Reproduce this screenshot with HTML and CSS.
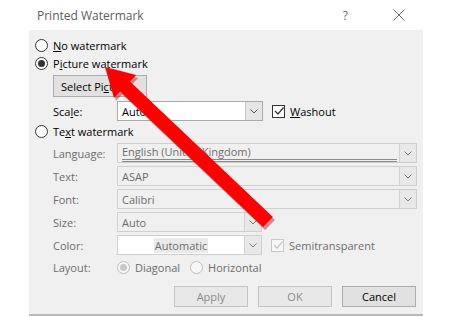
FILE: index.html
```html
<!DOCTYPE html>
<html>
<head>
<meta charset="utf-8">
<link rel="stylesheet" href="styles.css">
</head>
<body>
<div class="window">
  <div class="titlebar">
    <span class="title">Printed Watermark</span>
    <span class="help">?</span>
    <svg class="close" width="12" height="12" viewBox="0 0 12 12"><path d="M0.5 0.5 L11.5 11.5 M11.5 0.5 L0.5 11.5" stroke="#6a6a6a" stroke-width="1"/></svg>
  </div>
  <div class="panel">
    <div class="row opt first"><span class="radio"></span><span class="lbl"><u>N</u>o watermark</span></div>
    <div class="row opt"><span class="radio on"></span><span class="lbl">P<u>i</u>cture watermark</span></div>
    <div class="btn select">Select Pi<u>c</u>ture...</div>
    <div class="row field scale">
      <span class="flabel">Sca<u>l</u>e:</span>
      <div class="combo w146"><span class="val">Auto</span><span class="dd"><svg width="8" height="5" viewBox="0 0 8 5"><path d="M0.5 0.5 L4 4 L7.5 0.5" fill="none" stroke="#555" stroke-width="1"/></svg></span></div>
      <span class="check on"><svg width="10" height="10" viewBox="0 0 10 10"><path d="M1 5 L4 8 L9.5 1.5" fill="none" stroke="#333" stroke-width="1.2"/></svg></span>
      <span class="clabel"><u>W</u>ashout</span>
    </div>
    <div class="row opt tw"><span class="radio"></span><span class="lbl">Te<u>x</u>t watermark</span></div>
    <div class="fields">
      <div class="row field">
        <span class="flabel dis">Language:</span>
        <div class="combo dis w300 lang"><span class="val dis"><span class="dbl">English (United Kingdom)</span></span><span class="dd"><svg width="8" height="5" viewBox="0 0 8 5"><path d="M0.5 0.5 L4 4 L7.5 0.5" fill="none" stroke="#777" stroke-width="1"/></svg></span></div>
      </div>
      <div class="row field">
        <span class="flabel dis">Text:</span>
        <div class="combo dis w300"><span class="val dis">ASAP</span><span class="dd"><svg width="8" height="5" viewBox="0 0 8 5"><path d="M0.5 0.5 L4 4 L7.5 0.5" fill="none" stroke="#777" stroke-width="1"/></svg></span></div>
      </div>
      <div class="row field">
        <span class="flabel dis">Font:</span>
        <div class="combo dis w300"><span class="val dis">Calibri</span><span class="dd"><svg width="8" height="5" viewBox="0 0 8 5"><path d="M0.5 0.5 L4 4 L7.5 0.5" fill="none" stroke="#777" stroke-width="1"/></svg></span></div>
      </div>
      <div class="row field">
        <span class="flabel dis">Size:</span>
        <div class="combo dis w145"><span class="val dis">Auto</span><span class="dd"><svg width="8" height="5" viewBox="0 0 8 5"><path d="M0.5 0.5 L4 4 L7.5 0.5" fill="none" stroke="#777" stroke-width="1"/></svg></span></div>
      </div>
      <div class="row field">
        <span class="flabel dis">Color:</span>
        <div class="combo dis w145 color"><span class="val dis center"><span class="auto">Automatic</span></span><span class="dd"><svg width="8" height="5" viewBox="0 0 8 5"><path d="M0.5 0.5 L4 4 L7.5 0.5" fill="none" stroke="#777" stroke-width="1"/></svg></span></div>
        <span class="check dis"><svg width="10" height="10" viewBox="0 0 10 10"><path d="M1 5 L4 8 L9.5 1.5" fill="none" stroke="#c4c4c4" stroke-width="1.2"/></svg></span>
        <span class="clabel dis">Semitransparent</span>
      </div>
      <div class="row field layout">
        <span class="flabel dis">Layout:</span>
        <span class="radio dis on"></span><span class="lbl dis">Diagonal</span>
        <span class="radio dis gap"></span><span class="lbl dis">Horizontal</span>
      </div>
    </div>
    <div class="buttons">
      <div class="btn dis">Apply</div>
      <div class="btn dis">OK</div>
      <div class="btn">Cancel</div>
    </div>
  </div>
  <svg class="arrow" width="450" height="317" viewBox="0 0 450 317">
    <polygon points="107,70 138.2,78 132,84.5 274.9,220 265.1,230 122.2,94.5 116,101" fill="#8a0000" opacity="0.4"/>
    <polygon points="105,67 136.2,75 130,81.5 272.9,217 263.1,227 120.2,91.5 114,98" fill="#ff0000"/>
  </svg>
</div>
</body>
</html>
```

FILE: styles.css
```css
* { box-sizing: border-box; }
html, body { margin: 0; padding: 0; background: #ffffff; }
body {
  font-family: "Open Sans", "Noto Sans", sans-serif;
  font-size: 11px;
  color: #000;
}
u { text-decoration: underline; text-underline-offset: 1px; }
.window { position: relative; width: 450px; height: 317px; background: #fff; overflow: hidden; }
.titlebar { height: 30px; display: flex; align-items: center; }
.title { margin-left: 37px; color: #5c5c5c; font-size: 12px; }
.help { margin-left: auto; color: #6a6a6a; font-size: 12px; margin-right: 45px; }
.close { margin-right: 45px; }
.panel {
  margin-left: 29px;
  width: 394px;
  height: 286px;
  background: #f0f0f0;
  border-bottom: 2px solid #b9b9b9;
  display: flex;
  flex-direction: column;
}
.row { display: flex; align-items: center; }
.opt { height: 16px; margin-left: 6px; margin-top: 2px; }
.opt.first { margin-top: 7px; }
.opt.tw { margin-top: 2px; }
.radio {
  width: 13px; height: 13px; border-radius: 50%;
  border: 1px solid #333; background: #fff;
  display: inline-flex; align-items: center; justify-content: center;
  flex: none;
}
.radio.on::after { content: ""; width: 7px; height: 7px; border-radius: 50%; background: #333; }
.radio.dis { border-color: #bcbcbc; background: #f7f7f7; }
.radio.dis.on::after { background: #c7c7c7; }
.lbl { margin-left: 5px; }
.lbl.dis { color: #6d6d6d; }
.btn {
  height: 21px; width: 74px;
  background: #e1e1e1; border: 1px solid #adadad;
  display: flex; align-items: center; justify-content: center;
}
.btn.select { margin-left: 24px; margin-top: 4px; width: 94px; height: 22px; justify-content: flex-start; padding-left: 7px; }
.btn.dis { background: #e8e8e8; border-color: #c4c4c4; color: #8a8a8a; }
.field { height: 20px; margin-left: 24px; }
.scale { margin-top: 4px; }
.fields { display: flex; flex-direction: column; gap: 3px; margin-top: 4px; }
.flabel { width: 64px; flex: none; }
.flabel.dis { color: #6d6d6d; }
.combo {
  height: 20px; border: 1px solid #a9a9a9; background: #fff;
  display: flex; align-items: stretch; flex: none;
}
.combo.dis { border-color: #cfcfcf; background: #f0f0f0; }
.combo.color { background: #fff; }
.w146 { width: 146px; }
.w145 { width: 145px; }
.w300 { width: 300px; }
.val { flex: 1; display: flex; align-items: center; padding-left: 4px; overflow: hidden; white-space: nowrap; }
.val.dis { color: #6d6d6d; }
.val.center { justify-content: center; padding-left: 0; }
.auto { background: #eaeaea; padding: 0 1px; }
.lang .val { padding-right: 2px; }
.dbl { display: block; width: 100%; border-bottom: 3px double #8a8a8a; line-height: 14px; }
.dd {
  width: 17px; flex: none; background: #e5e5e5; border-left: 1px solid #c8c8c8;
  display: flex; align-items: center; justify-content: center;
}
.combo.dis .dd { background: #e8e8e8; border-left-color: #d2d2d2; }
.check {
  width: 13px; height: 13px; border: 1px solid #333; background: #fff;
  margin-left: 9px; display: flex; align-items: center; justify-content: center; flex: none;
}
.check.dis { border-color: #c8c8c8; background: #f7f7f7; }
.clabel { margin-left: 5px; }
.clabel.dis { color: #6d6d6d; }
.layout { height: 16px; margin-top: 1px; }
.layout .radio.gap { margin-left: 10px; }
.buttons { display: flex; justify-content: flex-end; gap: 10px; margin-top: 11px; margin-right: 7px; }
.arrow { position: absolute; left: 0; top: 0; pointer-events: none; }
```
